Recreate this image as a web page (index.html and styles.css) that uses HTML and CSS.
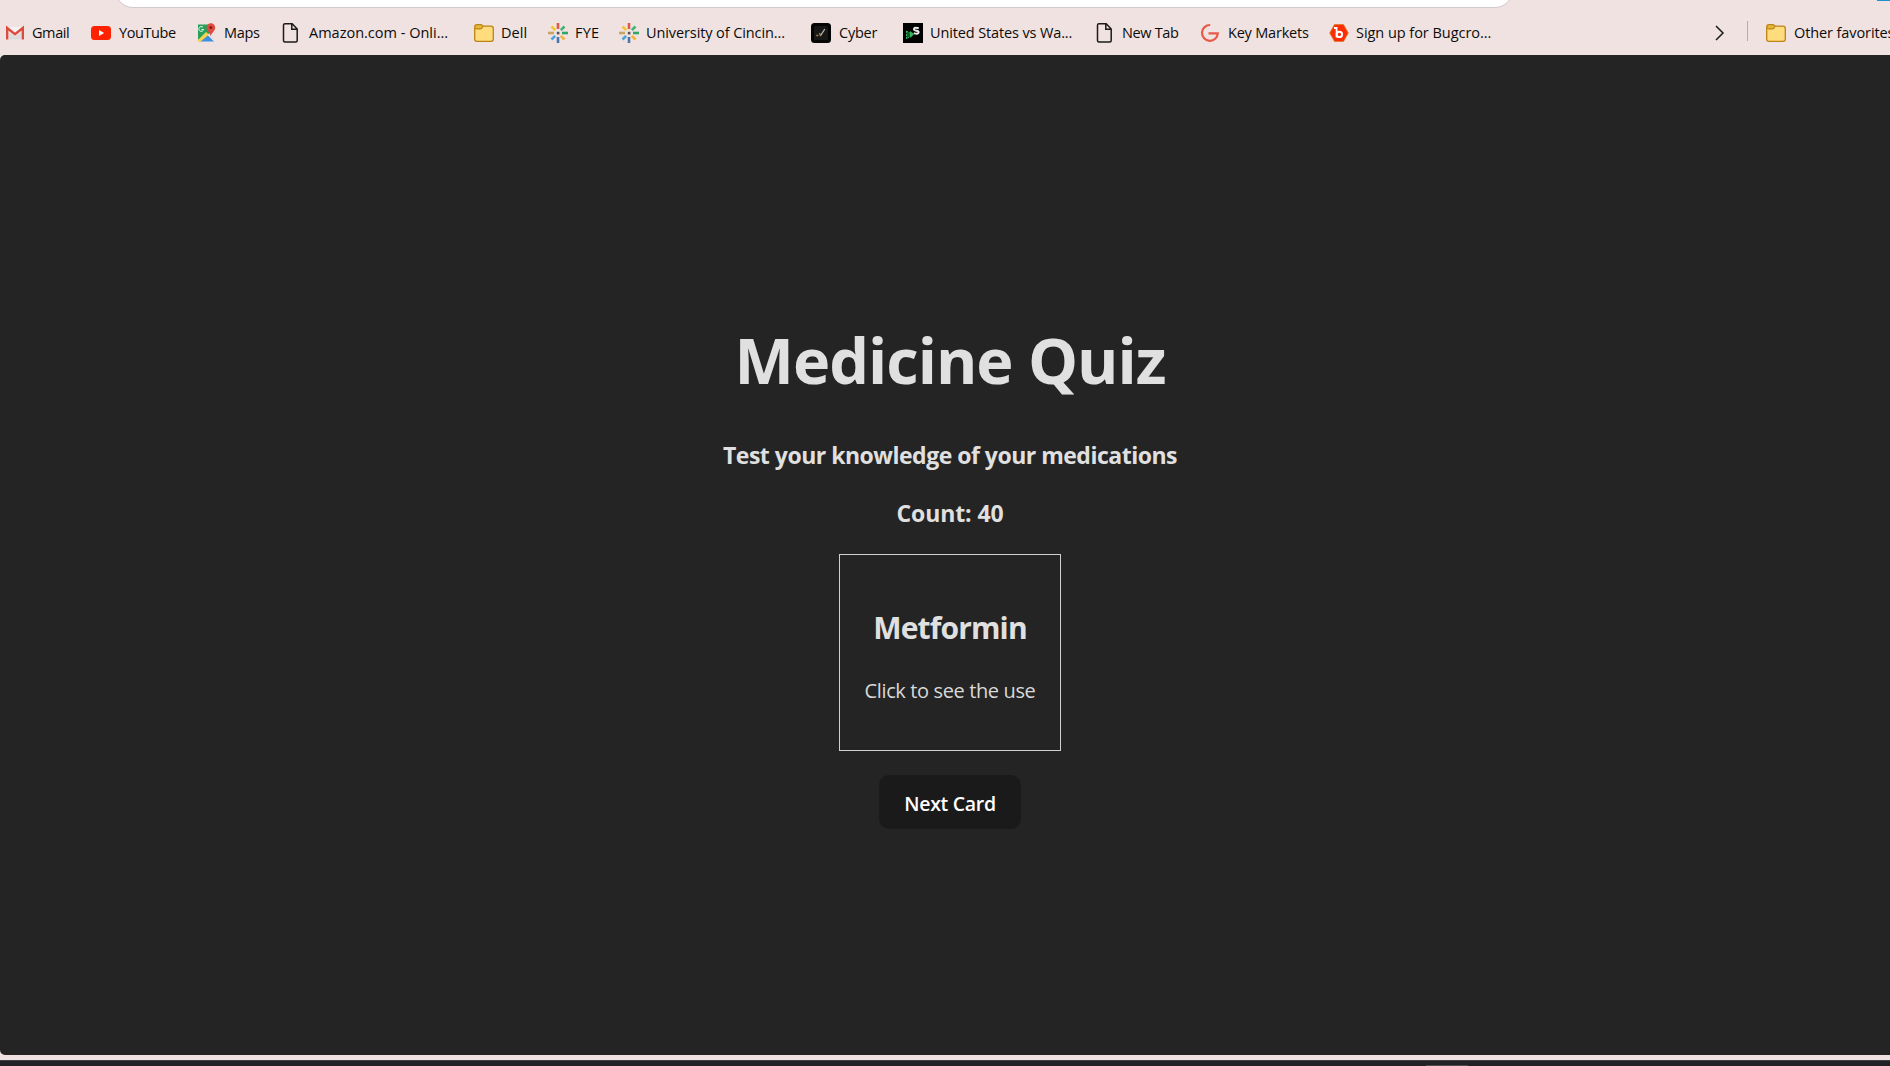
FILE: index.html
```
<!DOCTYPE html>
<html lang="en">
<head>
<meta charset="utf-8">
<title>Medicine Quiz</title>
<link rel="stylesheet" href="styles.css">
</head>
<body>
<svg class="defs" width="0" height="0">
  <symbol id="file" viewBox="0 0 20 20"><path d="M4 .8h7.2l5 5.2v11.5q0 1.5-1.5 1.5H4q-1.5 0-1.5-1.5V2.300Q2.500.8 4 .8zM10.800 1v5.300h5.200" fill="none" stroke="#1b1b1b" stroke-width="1.500"/></symbol>
  <symbol id="folder" viewBox="0 0 20 20"><path d="M.7 4.500v11.500q0 2.300 2.300 2.300h14q2.300 0 2.300-2.300V5.500q0-2.300-2.300-2.300H9" fill="#ffdc7c" stroke="#bd8314" stroke-width="1.300"/><path d="M3 1.600h4q1 0 2 1.600Q7.800 5.800 6.500 5.800H3Q.7 5.800.7 4q0-2.400 2.300-2.400z" fill="#e3b93c" stroke="#bd8314" stroke-width="1.200"/></symbol>
  <symbol id="burst" viewBox="0 0 20 20"><g stroke-width="2.600" fill="none"><path d="M10 0v6" stroke="#e2574c"/><path d="M16.500 3.500l-3.700 3.700" stroke="#3fb574"/><path d="M14 10h6" stroke="#2fa866"/><path d="M12.800 12.800l3.700 3.700" stroke="#f5b335"/><path d="M10 14v6" stroke="#4877b0"/><path d="M7.200 12.800l-3.700 3.700" stroke="#4ba3dc"/><path d="M0 10h6" stroke="#c9a565"/><path d="M3.500 3.500l3.700 3.700" stroke="#f2c52e"/></g><rect x="8.800" y="8.800" width="2.600" height="2.600" fill="#565656"/></symbol>
</svg>
<header class="browser">
  <div class="toolbar"><div class="address"></div><div class="accent"></div></div>
  <nav class="favorites">
    <div class="links">
      <a class="fav gmail"><svg viewBox="0 0 20 20"><path d="M1 4h18v12.500H1z" fill="#f4f1f1"/><path d="M4 16.500V9l6 4.500L16 9v7.500z" fill="#dcdcdc"/><path d="M2.200 16.500V5L10 11.300 17.800 5v11.500" fill="none" stroke="#dd4b3e" stroke-width="2.400"/></svg><span>Gmail</span></a>
      <a class="fav youtube"><svg viewBox="0 0 20 20"><rect y="3" width="20" height="14" rx="3.500" fill="#f20"/><path d="M8 7l5.200 3L8 13z" fill="#fff"/></svg><span>YouTube</span></a>
      <a class="fav maps"><svg viewBox="0 0 20 20"><path d="M1 1.500h13v8L1 17z" fill="#28a05c"/><path d="M2 18.500L9.500 10l7.500 8.500z" fill="#3d8fe0"/><path d="M9 9l3 2.500L3 19l-3-1z" fill="#fbd24b"/><path d="M10.500 12l6-2v8z" fill="#e4e4e4"/><path d="M6 4.300A2.400 2.400 0 1 0 6.600 6.500H4.400" fill="none" stroke="#e9fff0" stroke-width="1"/><path d="M13.800 13.500c-.4-4-4.200-5-4.200-9a4.300 4.300 0 0 1 8.600 0c0 4-4 5-4.400 9z" fill="#e04a3f"/><circle cx="13.900" cy="4.600" r="1.500" fill="#7b1f1a"/></svg><span>Maps</span></a>
      <a class="fav amazon"><svg><use href="#file"/></svg><span>Amazon.com - Onli...</span></a>
      <a class="fav dell"><svg><use href="#folder"/></svg><span>Dell</span></a>
      <a class="fav fye"><svg><use href="#burst"/></svg><span>FYE</span></a>
      <a class="fav uc"><svg><use href="#burst"/></svg><span>University of Cincin...</span></a>
      <a class="fav cyber"><svg viewBox="0 0 20 20"><rect width="20" height="20" rx="3.500" fill="#050505"/><rect x="3" y="3" width="14" height="14" rx="1.500" fill="#171717"/><path d="M9.300 13l4.500-7" stroke="#b9b9b0" stroke-width="1.300"/><path d="M5.300 12.500h2M8.500 10l1 2.500" stroke="#a18757" stroke-width="1.400"/></svg><span>Cyber</span></a>
      <a class="fav us"><svg viewBox="0 0 20 20"><rect width="20" height="20" fill="#000"/><path d="M3.500 8l6.500 4-6.500 3.800z" fill="#155b2b" stroke="#35b85d" stroke-width="1" stroke-dasharray="2 1"/><path d="M7 8v7l4-4z" fill="#35b85d"/><path d="M15.800 5.300q-4.800-1.300-4.800.8 0 1.400 2.300 1.600 2.700.4 2.300 1.800-.4 2-4.800.6" fill="none" stroke="#e8e8e8" stroke-width="2"/></svg><span>United States vs Wa...</span></a>
      <a class="fav newtab"><svg><use href="#file"/></svg><span>New Tab</span></a>
      <a class="fav markets"><svg viewBox="0 0 20 20"><path d="M8.500 10.300h9.300A7.900 7.900 0 1 1 10.200 2" fill="none" stroke="#e8594a" stroke-width="2.200"/></svg><span>Key Markets</span></a>
      <a class="fav bug"><svg viewBox="0 0 20 20"><path d="M5.500 1.500h9l4.800 8.500-4.800 8.500h-9L.7 10z" fill="#fa2d05" stroke="#dc7d2c" stroke-width=".8"/><path d="M5 5h2.600v9.500" fill="none" stroke="#fff" stroke-width="1.800"/><circle cx="10.400" cy="11.400" r="2.700" fill="none" stroke="#fff" stroke-width="2"/></svg><span>Sign up for Bugcro...</span></a>
    </div>
    <div class="overflow">
      <svg class="chevron" viewBox="0 0 10 16"><path d="M1 1l7 7-7 7" fill="none" stroke="#1b1b1b" stroke-width="1.500"/></svg>
      <div class="divider"></div>
      <a class="fav other"><svg><use href="#folder"/></svg><span>Other favorites</span></a>
    </div>
  </nav>
</header>
<main class="page">
  <h1>Medicine Quiz</h1>
  <h3 class="tagline">Test your knowledge of your medications</h3>
  <h3 class="count">Count: 40</h3>
  <div class="card">
    <h2>Metformin</h2>
    <p>Click to see the use</p>
  </div>
  <button>Next Card</button>
</main>
<footer class="taskbar"><div class="indicator"></div></footer>
</body>
</html>
```
FILE: styles.css
```
* { box-sizing: border-box; }
body {
  margin: 0;
  height: 1066px;
  overflow: hidden;
  display: flex;
  flex-direction: column;
  background: #f0e2e0;
  font-family: "Open Sans", "Noto Sans", sans-serif;
}
.defs { display: none; }
h1, h2, h3, p { margin: 0; white-space: nowrap; }

.browser { height: 55px; flex: none; }
.toolbar {
  height: 8px;
  overflow: hidden;
  display: flex;
  align-items: flex-end;
  justify-content: space-between;
  padding-left: 115px;
}
.address {
  flex: none;
  width: 1398px;
  height: 36px;
  background: #fff;
  border: 1px solid #cfc9c9;
  border-radius: 18px;
}
.accent { width: 13px; height: 1px; align-self: flex-start; background: #1f8fd0; }

.favorites {
  height: 47px;
  display: flex;
  justify-content: space-between;
  padding: 15px 0 0 5px;
}
.links {
  display: grid;
  grid-template-columns: 86px 106px 84px 193px 74px 71px 192px 92px 192px 105px 129px 170px;
}
.fav {
  height: 20px;
  display: flex;
  align-items: center;
  gap: 8px;
  font-size: 14.5px;
  line-height: 20px;
  color: #0c0c0c;
  white-space: nowrap;
}
.fav svg { flex: none; width: 20px; height: 20px; }
.gmail { letter-spacing: -0.42px; gap: 7px; }
.youtube { letter-spacing: -0.41px; }
.maps { letter-spacing: -0.32px; gap: 7px; }
.dell { letter-spacing: 0.1px; gap: 7px; }
.fye { letter-spacing: 0.2px; gap: 7px; }
.uc { letter-spacing: -0.1px; gap: 7px; }
.cyber { letter-spacing: -0.25px; }
.us { letter-spacing: -0.13px; gap: 7px; }
.newtab { letter-spacing: -0.35px; gap: 7px; }
.markets { letter-spacing: -0.2px; }
.bug { letter-spacing: -0.04px; gap: 7px; }
.other { letter-spacing: -0.1px; width: 124px; }
.overflow { display: flex; }
.chevron { width: 10px; height: 16px; margin: 2px 22px 0 0; }
.divider { width: 1px; height: 20px; margin: -2px 18px 0 0; background: #b5abaa; }

.page {
  height: 1000px;
  flex: none;
  display: flex;
  flex-direction: column;
  align-items: center;
  padding: 269px 0 0 10px;
  background: #242424;
  border-radius: 5px 0 0 5px;
  color: #e0e0e0;
}
h1 { font-size: 63px; line-height: 72px; letter-spacing: -1px; }
h3 { font-size: 23px; line-height: 34px; }
.tagline { margin-top: 42px; letter-spacing: -0.5px; }
.count { margin-top: 24px; letter-spacing: -0.1px; }
.card {
  width: 222px;
  height: 197px;
  margin-top: 24px;
  padding-top: 52px;
  border: 1px solid #d0d0d0;
  text-align: center;
}
.card h2 { font-size: 30px; line-height: 42px; letter-spacing: -0.85px; }
.card p { margin-top: 27px; font-size: 20px; line-height: 30px; letter-spacing: -0.38px; color: #d9d9d9; }
button {
  width: 142px;
  height: 54px;
  margin-top: 24px;
  padding: 3px 0 0;
  border: 0;
  border-radius: 10px;
  background: #1a1a1a;
  color: #fff;
  font: 600 19.5px "Open Sans", "Noto Sans", sans-serif;
  letter-spacing: -0.3px;
}
.taskbar {
  height: 6px;
  margin-top: 5px;
  padding: 5px 0 0 1426px;
  background: #222225;
  border-top: 1px solid #45403f;
}
.indicator { width: 42px; height: 1px; margin-top: -1px; background: #504b4d; }
```
